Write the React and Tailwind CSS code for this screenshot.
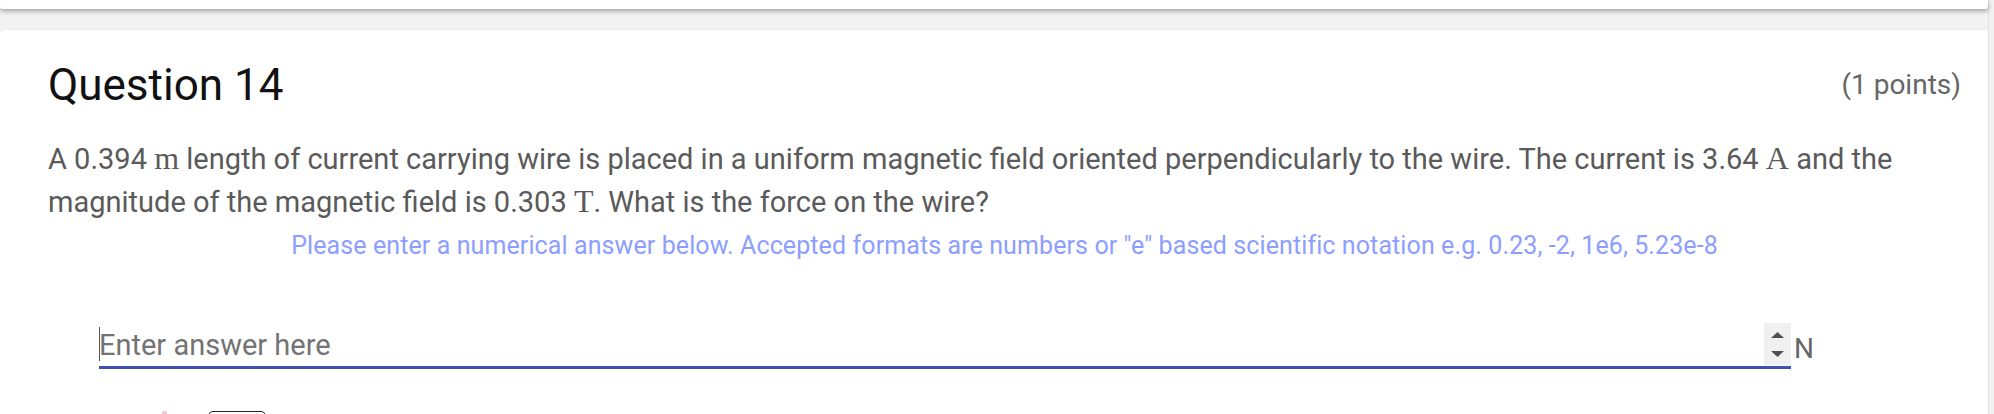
const M = ({ children }) => (
  <span className="font-['Liberation_Serif','DejaVu_Serif',serif] text-[32px] leading-none">{children}</span>
);

const Arrow = ({ down }) => (
  <svg width="13" height="6" viewBox="0 0 13 6">
    <path d={down ? 'M0 0 L6.5 6 L13 0Z' : 'M0 6 L6.5 0 L13 6Z'} fill="#505050" />
  </svg>
);

export default function App() {
  return (
    <div className="w-[1994px] h-[414px] overflow-hidden flex bg-[#f2f2f2] font-['Roboto','Liberation_Sans',sans-serif]">
      <div className="flex-1 min-w-0 flex flex-col">
        <div className="h-[9px] shrink-0 bg-white rounded-b-[3px] shadow-[0_2px_5px_rgba(0,0,0,0.35)] relative z-10" />
        <div className="mt-[21px] flex-1 bg-white rounded-t-[4px] shadow-[0_1px_3px_rgba(0,0,0,0.15)] pl-[48px] pr-[27px] pt-[33px]">
          <div className="flex items-center justify-between">
            <h2 className="text-[44px] leading-[44px] text-[#111]">Question 14</h2>
            <span className="text-[28px] leading-[42px] text-[#666]">(1 points)</span>
          </div>

          <p className="mt-[31px] text-[29px] leading-[43px] text-[#5a5a5a]">
            A 0.394 <M>m</M> length of current carrying wire is placed in a uniform magnetic field oriented
            perpendicularly to the wire. The current is 3.64 <M>A</M> and the magnitude of the magnetic field
            is 0.303 <M>T</M>. What is the force on the wire?
          </p>

          <p className="mt-[4px] text-center text-[25px] leading-[36px] tracking-[0.1px] text-[#8c9eff]">
            Please enter a numerical answer below. Accepted formats are numbers or "e" based scientific notation
            e.g. 0.23, -2, 1e6, 5.23e-8
          </p>

          <div className="mt-[59px] ml-[51px] flex items-start">
            <div className="relative w-[1692px]">
              <input
                type="text"
                placeholder="Enter answer here"
                className="block w-full h-[46px] p-0 pr-[30px] bg-transparent border-b-[3px] border-[#3f51b5] text-[29px] text-[#333] outline-none placeholder:text-[#737373]"
              />
              <span className="absolute left-0 top-[4px] h-[34px] w-px bg-[#555]" />
              <div className="absolute right-0 top-0 w-[27px] h-[42px] bg-[#f0f0f0] flex flex-col items-center justify-center gap-[13px]">
                <Arrow />
                <Arrow down />
              </div>
            </div>
            <span className="ml-[3px] mt-[10px] text-[28px] leading-[32px] text-[#666]">N</span>
          </div>

          <div className="mt-[42px] flex items-start">
            <span className="ml-[114px] w-[5px] h-[6px] rounded-t-[2px] bg-[#f2c4cf]" />
            <span className="ml-[41px] w-[58px] h-[40px] rounded-[5px] border border-[#222]" />
          </div>
        </div>
      </div>
      <div className="w-[6px] shrink-0 bg-[#f1f1f1] border-l border-[#e3e3e3]" />
    </div>
  );
}
